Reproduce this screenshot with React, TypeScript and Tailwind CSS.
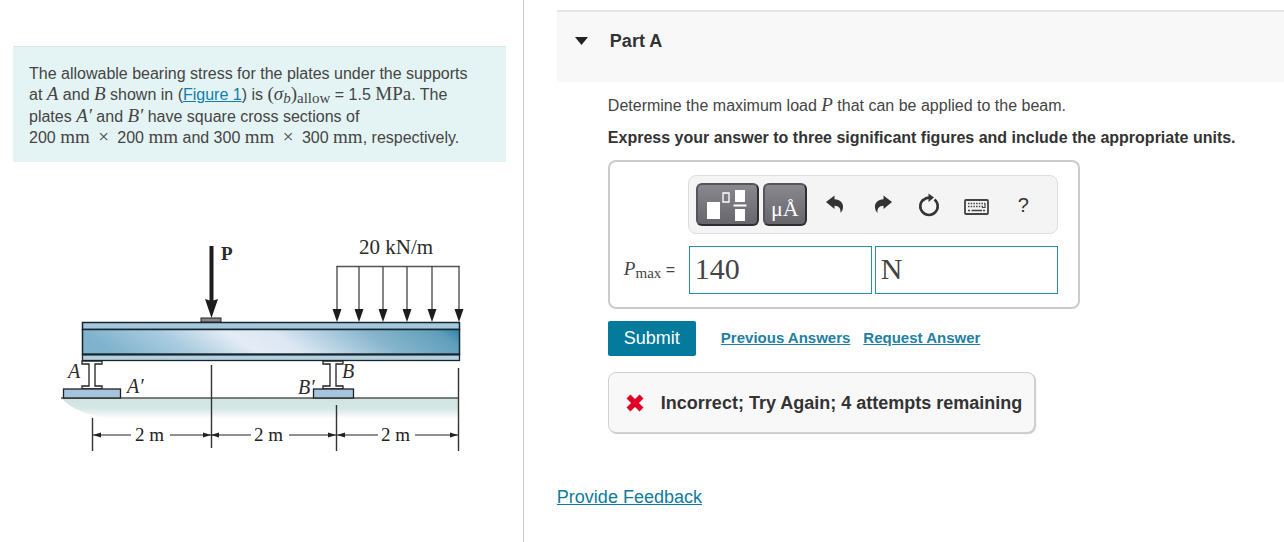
import type { ReactNode } from "react";

function M({ children, italic = false }: { children: ReactNode; italic?: boolean }) {
  return (
    <span className={`font-["Liberation_Serif",serif] text-[19px] leading-none ${italic ? "italic" : ""}`}>
      {children}
    </span>
  );
}

function Times() {
  return <span className='mx-1 font-["Liberation_Serif",serif] text-[19px] leading-none'>×</span>;
}

function Dimension({ from, to, y, label, labelX, gap }: {
  from: number; to: number; y: number; label: string; labelX: number; gap: [number, number];
}) {
  return (
    <g stroke="#222" fill="#222">
      <path d={`M${from} ${y}H${gap[0]}M${gap[1]} ${y}H${to}`} strokeWidth="1.2" />
      <path d={`M${from} ${y}l8 -2.5v5zM${to} ${y}l-8 -2.5v5z`} stroke="none" />
      <text x={labelX} y={y + 6} stroke="none" fontSize="19">{label}</text>
    </g>
  );
}

function Support({ x }: { x: number }) {
  return (
    <path
      d={`M${x - 10} 362h20v3h-7v22h7v3h-20v-3h7v-22h-7z`}
      fill="#fff" stroke="#222" strokeWidth="1.3"
    />
  );
}

const loads = [337, 359, 383, 407, 432, 459];

function BeamFigure() {
  return (
    <svg viewBox="56 230 412 228" className='block w-[412px] max-w-full font-["Liberation_Serif",serif]' role="img" aria-label="Beam with point load P and distributed load">
      <defs>
        <linearGradient id="web" x1="0" y1="0.1" x2="1" y2="0">
          <stop offset="0" stopColor="#7fb3cd" />
          <stop offset="0.2" stopColor="#a9cbdf" />
          <stop offset="0.38" stopColor="#e4ecf6" />
          <stop offset="0.5" stopColor="#dbe7f3" />
          <stop offset="0.75" stopColor="#86b5cd" />
          <stop offset="0.93" stopColor="#609fbb" />
          <stop offset="1" stopColor="#2f86a5" />
        </linearGradient>
        <linearGradient id="ground" x1="0" y1="0" x2="0" y2="1">
          <stop offset="0" stopColor="#cfe3e0" />
          <stop offset="0.5" stopColor="#d6e8e5" />
          <stop offset="1" stopColor="#fff" />
        </linearGradient>
      </defs>

      <path d="M62 399H459V420H112Q78 416 62 400z" fill="url(#ground)" />
      <path d="M61 399H459" stroke="#555" strokeWidth="1.5" />

      <rect x="82.5" y="323.5" width="377" height="7" fill="#a6c8dc" stroke="#152630" strokeWidth="1.5" />
      <rect x="82.5" y="330.5" width="377" height="25" fill="url(#web)" stroke="#152630" strokeWidth="1.5" />
      <rect x="82.5" y="355.5" width="377" height="6" fill="#b5d0de" stroke="#152630" strokeWidth="1.3" />
      <path d="M82 355.5H460" stroke="#152630" strokeWidth="2" />

      <Support x={92} />
      <Support x={333} />
      <rect x="63.5" y="390" width="57" height="9" fill="#a5c4de" stroke="#222" strokeWidth="1.3" />
      <rect x="313.5" y="390" width="40" height="9" fill="#a5c4de" stroke="#222" strokeWidth="1.3" />

      <rect x="201" y="319" width="20" height="4" fill="#888" stroke="#222" />
      <path d="M211.5 247V306" stroke="#1d1d1d" strokeWidth="4" />
      <path d="M205 300l6.5 2l6.5 -2l-6.5 19z" fill="#1d1d1d" />

      <path d="M336.5 267.5H459.5" stroke="#555" strokeWidth="1.5" />
      {loads.map((x) => (
        <g key={x}>
          <path d={`M${x} 267V312`} stroke="#444" strokeWidth="1.3" />
          <path d={`M${x - 4.5} 310h9l-4.5 13z`} fill="#1d1d1d" />
        </g>
      ))}

      <path d="M92.5 419V452M211.5 366V449M336.5 406V452M458.5 369V452" stroke="#333" strokeWidth="1.4" />
      <Dimension from={93} to={211} y={436} label="2 m" labelX={135} gap={[131, 170]} />
      <Dimension from={211} to={336} y={436} label="2 m" labelX={254} gap={[251, 289]} />
      <Dimension from={337} to={458} y={436} label="2 m" labelX={381} gap={[378, 415]} />

      <g fill="#2b2b2b" fontSize="21">
        <text x="221" y="261" fontWeight="bold" fontSize="19">P</text>
        <text x="359" y="255">20 kN/m</text>
        <g fontStyle="italic" fontSize="20">
          <text x="68" y="379">A</text>
          <text x="127" y="394">A′</text>
          <text x="342" y="379">B</text>
          <text x="298" y="395">B′</text>
        </g>
      </g>
    </svg>
  );
}

const darkButton =
  "flex h-[43px] items-center justify-center rounded-md border-2 border-[#2f2f33] border-t-[#55555a] border-l-[#55555a] bg-linear-to-b from-[#88888e] to-[#66666c] text-white";

function CurvedArrow({ flip = false }: { flip?: boolean }) {
  return (
    <svg viewBox="0 0 18 19" className={`h-[19px] w-[18px] ${flip ? "-scale-x-100" : ""}`} fill="#333">
      <path d="M0 7L8.500 0.500V4.200C14 4.200 17.500 8 17 12.500C16.800 15 15.800 16.500 14.500 18C15 13.500 13 11 8.500 10.800V14Z" />
    </svg>
  );
}

function Toolbar() {
  return (
    <div className="flex h-[59px] items-center rounded-lg border border-[#dedede] bg-[#f4f4f4] pl-[7px]">
      <button aria-label="Templates" className={`${darkButton} mr-1 w-[63px]`}>
        <svg viewBox="0 0 40 34" className="h-[34px] w-10" fill="#fff">
          <path d="M0 14h13v17H0zM28 2h10v12H28zM28 21h10v12H28zM26.500 16.500h13v2H26.500z" />
          <path d="M16 5h6v9h-6z" fill="none" stroke="#fff" strokeWidth="1.3" />
        </svg>
      </button>
      <button aria-label="Symbols" className={`${darkButton} mr-[19px] w-11 pt-2 font-["Liberation_Serif",serif] text-[22px] leading-none`}>
        μÅ
      </button>
      <button aria-label="Undo" className="mr-[30px]"><CurvedArrow /></button>
      <button aria-label="Redo" className="mr-[26px]"><CurvedArrow flip /></button>
      <button aria-label="Reset" className="mr-6">
        <svg viewBox="0 0 22 24" className="h-6 w-[22px]">
          <path d="M5.500 6.500A8.700 8.700 0 1 0 16.500 6.500" fill="none" stroke="#333" strokeWidth="2.600" />
          <path d="M5 7.500Q7.500 4.500 12 4.500" fill="none" stroke="#333" strokeWidth="2.400" />
          <path d="M10.500 0.500L16 4.500L10.500 9Z" fill="#333" />
        </svg>
      </button>
      <button aria-label="Keyboard shortcuts" className="mr-[29px] pt-1">
        <svg viewBox="0 0 25 16" className="h-4 w-[25px]" fill="none" stroke="#444">
          <rect x="1" y="1" width="23" height="14" rx="1" strokeWidth="1.800" />
          <path d="M4 4.500H21" strokeWidth="1.600" strokeDasharray="1.500 1.200" />
          <path d="M4 7.500H19" strokeWidth="1.600" strokeDasharray="1.500 1.200" />
          <path d="M21 4V8.500H18" strokeWidth="1.200" />
          <path d="M4 11.500H6M7.500 11.500H18M19 11.500H21" strokeWidth="1.700" />
        </svg>
      </button>
      <button aria-label="Help" className="text-xl leading-none text-[#333]">?</button>
    </div>
  );
}

const answerInput =
  'h-12 w-[183px] border border-[#2a8fa0] bg-white px-[5px] pb-0.5 font-["Liberation_Serif",serif] text-3xl text-[#444] outline-none';

export default function App() {
  return (
    <div className='flex min-h-screen bg-white font-["Liberation_Sans",Arial,sans-serif] text-base text-[#444]'>
      <aside className="w-[40.8%] shrink-0 border-r border-[#c4ccd4] pt-[46px] pr-[17px] pl-[13px]">
        <p className="border-t border-[#dde6e6] bg-[#e4f4f4] pt-4 pr-6 pb-[14px] pl-4 leading-[21px]">
          The allowable bearing stress for the plates under the supports at <M italic>A</M> and <M italic>B</M> shown in (
          <a href="#figure" className="text-[#0f7ea8] underline">Figure 1</a>) is <M>(</M><M italic>σ</M>
          <sub className='bottom-0 align-[-3px] font-["Liberation_Serif",serif] text-[15px] leading-none italic'>b</sub><M>)</M>
          <sub className='bottom-0 align-[-3px] font-["Liberation_Serif",serif] text-[15px] leading-none'>allow</sub> = 1.5 <M>MPa</M>. The
          plates <M italic>A′</M> and <M italic>B′</M> have square cross sections of
          <br />
          200 <M>mm</M> <Times /> 200 <M>mm</M> and 300 <M>mm</M> <Times /> 300 <M>mm</M>, respectively.
        </p>
        <div id="figure" className="pt-[67px] pl-[43px]">
          <BeamFigure />
        </div>
      </aside>

      <main className="min-w-0 flex-1 pt-[10px] pl-[33px]">
        <header className="flex h-[72px] items-start gap-[22px] border-t-2 border-[#e6e6e6] bg-[#f8f8f8] pt-[17px] pl-[18px]">
          <button aria-label="Collapse Part A" className="flex h-6 items-center">
            <svg viewBox="0 0 13 8" className="h-2 w-[13px]" fill="#222"><path d="M0 0H13L6.500 8Z" /></svg>
          </button>
          <h2 className="text-lg leading-6 font-bold text-[#333]">Part A</h2>
        </header>

        <div className="pl-[51px]">
          <p className="mt-3 leading-6">
            Determine the maximum load <M italic>P</M> that can be applied to the beam.
          </p>
          <p className="mt-2 leading-6 font-bold text-[#333]">
            Express your answer to three significant figures and include the appropriate units.
          </p>

          <div className="mt-[10px] flex w-fit flex-col gap-3 rounded-lg border-2 border-[#cbcbcb] pt-[13px] pr-5 pb-[13px] pl-[14px]">
            <div className="pl-16"><Toolbar /></div>
            <div className="flex items-center">
              <label htmlFor="value" className="w-[65px] whitespace-nowrap">
                <M italic>P</M>
                <sub className='bottom-0 align-[-3px] font-["Liberation_Serif",serif] text-[15px] leading-none'>max</sub> =
              </label>
              <div className="flex gap-[3px]">
                <input id="value" defaultValue="140" className={answerInput} />
                <input aria-label="Units" defaultValue="N" className={answerInput} />
              </div>
            </div>
          </div>

          <div className="mt-3 flex items-center text-[15px] font-bold text-[#1f80a0]">
            <button className="mr-[25px] h-[35px] w-[88px] rounded-xs bg-[#047a9c] pb-0.5 text-lg font-normal text-white">Submit</button>
            <a href="#previous" className="mr-[13px] underline">Previous Answers</a>
            <a href="#request" className="underline">Request Answer</a>
          </div>

          <div role="status" className="mt-4 flex h-[61px] w-fit items-center gap-[17px] rounded-lg border border-[#d0d0d0] bg-[#f8f8f8] pr-3 pl-[17px] text-lg font-bold text-[#333] shadow-[1px_1px_1px_#c8c8c8]">
            <svg viewBox="0 0 18 18" className="size-[18px]" stroke="#e00028" strokeWidth="5.500">
              <path d="M2.500 2.500L15.500 15.500M15.500 2.500L2.500 15.500" />
            </svg>
            Incorrect; Try Again; 4 attempts remaining
          </div>
        </div>

        <a href="#feedback" className="mt-[52px] inline-block text-lg leading-6 text-[#0f7a9c] underline">Provide Feedback</a>
      </main>
    </div>
  );
}
